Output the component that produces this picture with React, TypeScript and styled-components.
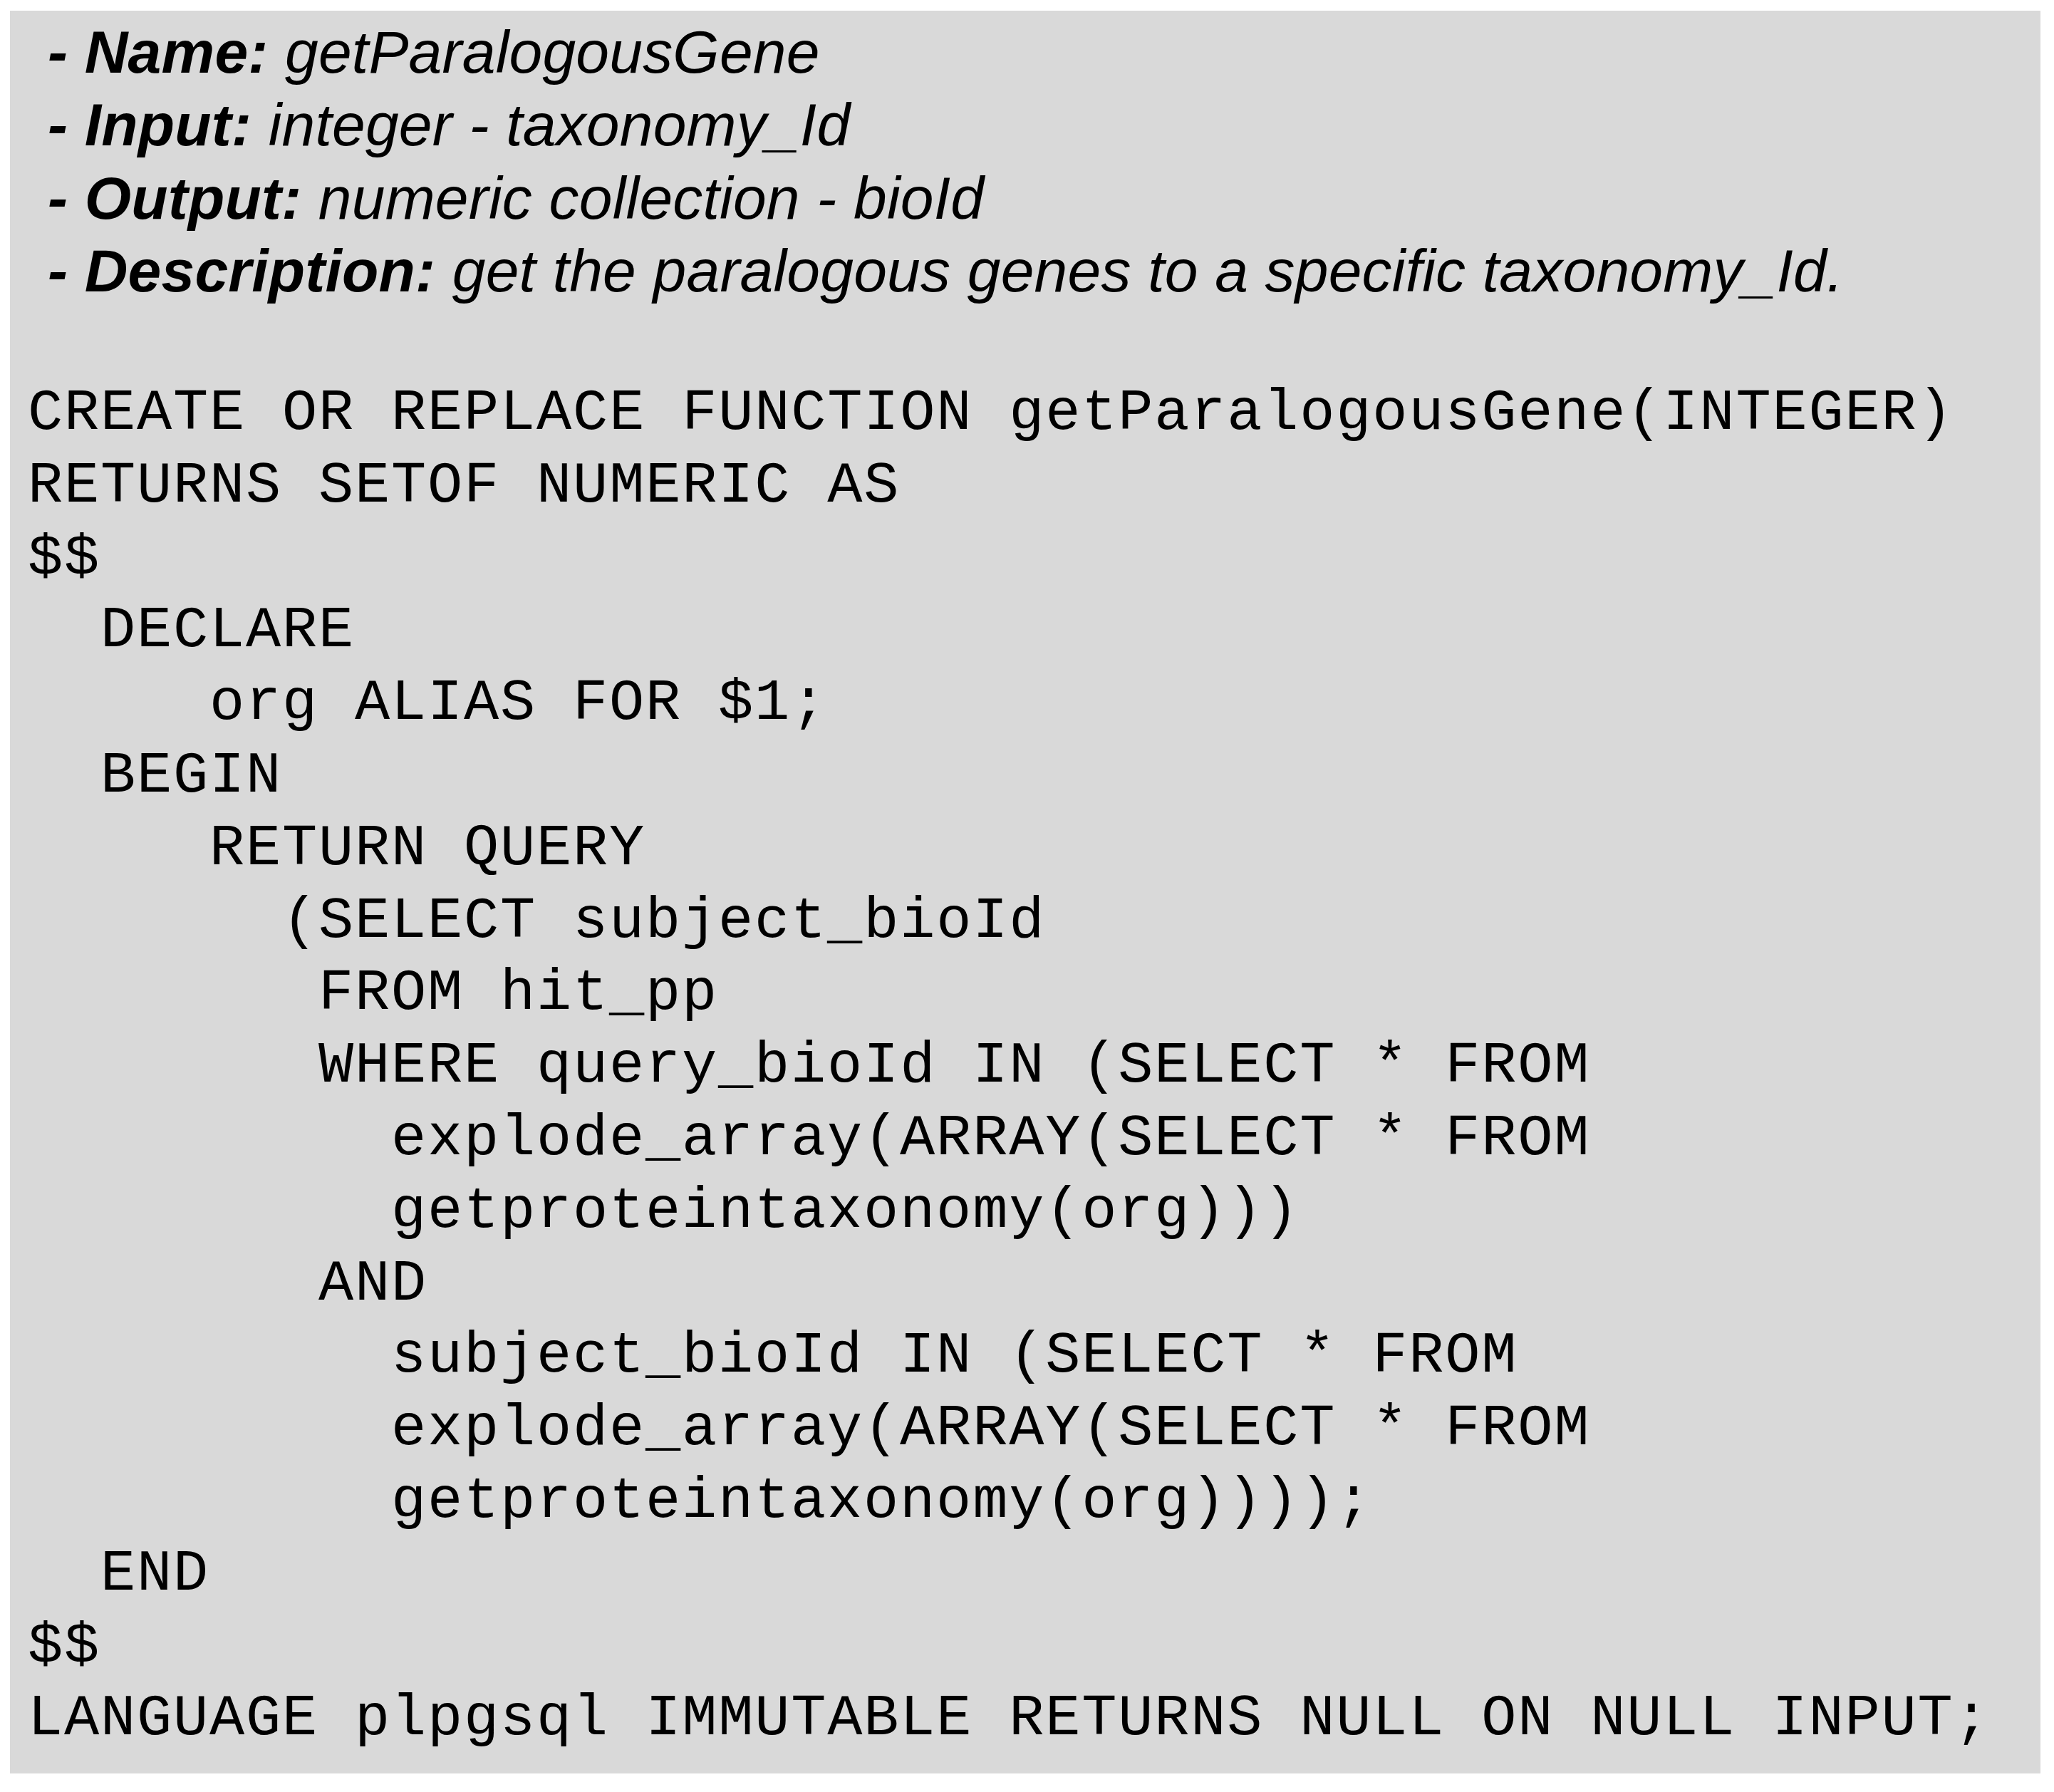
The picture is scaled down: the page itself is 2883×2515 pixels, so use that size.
import React from "react";
import styled, { createGlobalStyle } from "styled-components";

const GlobalStyle = createGlobalStyle`
  html, body {
    margin: 0;
    padding: 0;
    background: #ffffff;
  }
  body {
    font-family: "Liberation Sans", Arial, sans-serif;
    color: #000;
  }
`;

const Page = styled.div`
  padding: 15px 0 0 14px;
`;

const Panel = styled.section`
  box-sizing: border-box;
  width: 2850px;
  height: 2474px;
  background: #d9d9d9;
  padding: 7px 0 0 25px;
  display: flex;
  flex-direction: column;
`;

const SpecList = styled.div`
  display: flex;
  flex-direction: column;
  padding-left: 28px;
`;

const SpecLine = styled.div`
  font-family: "Liberation Sans", Arial, sans-serif;
  font-style: italic;
  font-size: 84px;
  line-height: 102.4px;
  letter-spacing: 0.2px;
  white-space: pre;
  color: #000;
`;

const Label = styled.span`
  font-weight: 700;
`;

const Value = styled.span`
  font-weight: 400;
`;

const CodeBlock = styled.pre`
  margin: 98.4px 0 0 0;
  font-family: "Courier New", "Nimbus Mono PS", "Nimbus Mono L", FreeMono, "Liberation Mono", monospace;
  font-size: 82px;
  line-height: 101.8px;
  letter-spacing: 1.8px;
  color: #000;
  display: flex;
  flex-direction: column;
`;

const CodeLine = styled.span<{ $indent: number }>`
  display: block;
  height: 101.8px;
  padding-left: ${(p) => p.$indent * 51}px;
  white-space: pre;
`;

const spec: { label: string; value: string }[] = [
  { label: "Name:", value: " getParalogousGene" },
  { label: "Input:", value: " integer - taxonomy_Id" },
  { label: "Output:", value: " numeric collection - bioId" },
  { label: "Description:", value: " get the paralogous genes to a specific taxonomy_Id." },
];

const code: [number, string][] = [
  [0, "CREATE OR REPLACE FUNCTION getParalogousGene(INTEGER)"],
  [0, "RETURNS SETOF NUMERIC AS"],
  [0, "$$"],
  [2, "DECLARE"],
  [5, "org ALIAS FOR $1;"],
  [2, "BEGIN"],
  [5, "RETURN QUERY"],
  [7, "(SELECT subject_bioId"],
  [8, "FROM hit_pp"],
  [8, "WHERE query_bioId IN (SELECT * FROM"],
  [10, "explode_array(ARRAY(SELECT * FROM"],
  [10, "getproteintaxonomy(org)))"],
  [8, "AND"],
  [10, "subject_bioId IN (SELECT * FROM"],
  [10, "explode_array(ARRAY(SELECT * FROM"],
  [10, "getproteintaxonomy(org))));"],
  [2, "END"],
  [0, "$$"],
  [0, "LANGUAGE plpgsql IMMUTABLE RETURNS NULL ON NULL INPUT;"],
];

export default function App() {
  return (
    <>
      <GlobalStyle />
      <Page>
        <Panel>
          <SpecList>
            {spec.map((s) => (
              <SpecLine key={s.label}>
                <Label>- {s.label}</Label>
                <Value>{s.value}</Value>
              </SpecLine>
            ))}
          </SpecList>
          <CodeBlock>
            {code.map(([indent, text], i) => (
              <CodeLine key={i} $indent={indent}>
                {text}
              </CodeLine>
            ))}
          </CodeBlock>
        </Panel>
      </Page>
    </>
  );
}
